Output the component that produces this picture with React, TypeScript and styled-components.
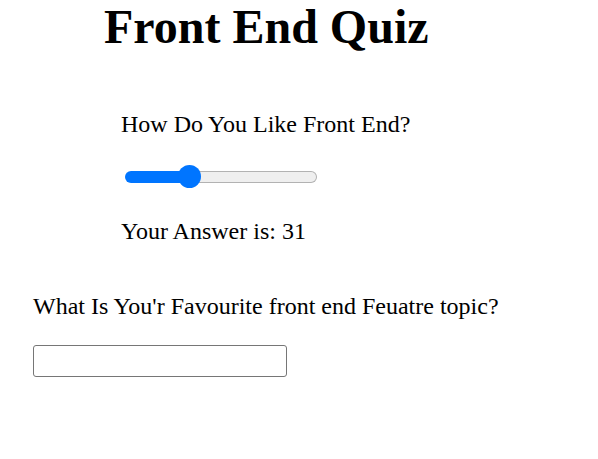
import React, { useState } from "react";
import styled, { createGlobalStyle } from "styled-components";

const GlobalStyle = createGlobalStyle`
  html, body {
    margin: 0;
    padding: 0;
    background: #ffffff;
  }
  body {
    font-family: "Liberation Serif", "Times New Roman", serif;
    color: #000000;
  }
`;

const Page = styled.div`
  display: flex;
  flex-direction: column;
  align-items: flex-start;
`;

const Title = styled.h1`
  margin: 0;
  padding-left: 104px;
  font-size: 48px;
  font-weight: bold;
  line-height: 54px;
`;

const Section = styled.section<{ $indent: number; $top: number }>`
  display: flex;
  flex-direction: column;
  align-items: flex-start;
  padding-left: ${(p) => p.$indent}px;
  margin-top: ${(p) => p.$top}px;
`;

const Label = styled.p<{ $gap?: number }>`
  margin: ${(p) => p.$gap ?? 0}px 0 0 0;
  font-size: 24px;
  line-height: 28px;
`;

const Range = styled.input<{ $fill: number }>`
  -webkit-appearance: none;
  appearance: none;
  margin: 27px 0 0 4px;
  padding: 0;
  width: 192px;
  height: 23px;
  background: transparent;
  cursor: pointer;

  &::-webkit-slider-runnable-track {
    box-sizing: border-box;
    height: 12px;
    border-radius: 6px;
    border: 1px solid transparent;
    background:
      linear-gradient(
          to right,
          #0075ff 0 ${(p) => p.$fill}px,
          transparent ${(p) => p.$fill}px
        )
        border-box,
      linear-gradient(#efefef, #efefef) padding-box,
      linear-gradient(#b2b2b2, #b2b2b2) border-box;
  }

  &::-webkit-slider-thumb {
    -webkit-appearance: none;
    appearance: none;
    width: 23px;
    height: 23px;
    border-radius: 50%;
    background: #0075ff;
    border: none;
    margin-top: -6.5px;
  }

  &:focus {
    outline: none;
  }
`;

const TextField = styled.input`
  box-sizing: border-box;
  margin: 25px 0 0 0;
  width: 254px;
  height: 32px;
  border: 1px solid #767676;
  border-radius: 3px;
  padding: 1px 3px;
  font-family: "Liberation Sans", Arial, sans-serif;
  font-size: 20px;
  background: #ffffff;

  &:focus {
    outline: none;
  }
`;

export default function App() {
  const [value, setValue] = useState(31);
  const width = 192;
  const thumb = 23;
  const fill = thumb / 2 + (value / 100) * (width - thumb);

  return (
    <>
      <GlobalStyle />
      <Page>
        <Title>Front End Quiz</Title>
        <Section $indent={121} $top={56}>
          <Label>How Do You Like Front End?</Label>
          <Range
            type="range"
            min={0}
            max={100}
            value={value}
            $fill={fill}
            onChange={(e) => setValue(Number(e.target.value))}
          />
          <Label $gap={29}>Your Answer is: {value}</Label>
        </Section>
        <Section $indent={33} $top={47}>
          <Label>What Is You'r Favourite front end Feuatre topic?</Label>
          <TextField type="text" />
        </Section>
      </Page>
    </>
  );
}
